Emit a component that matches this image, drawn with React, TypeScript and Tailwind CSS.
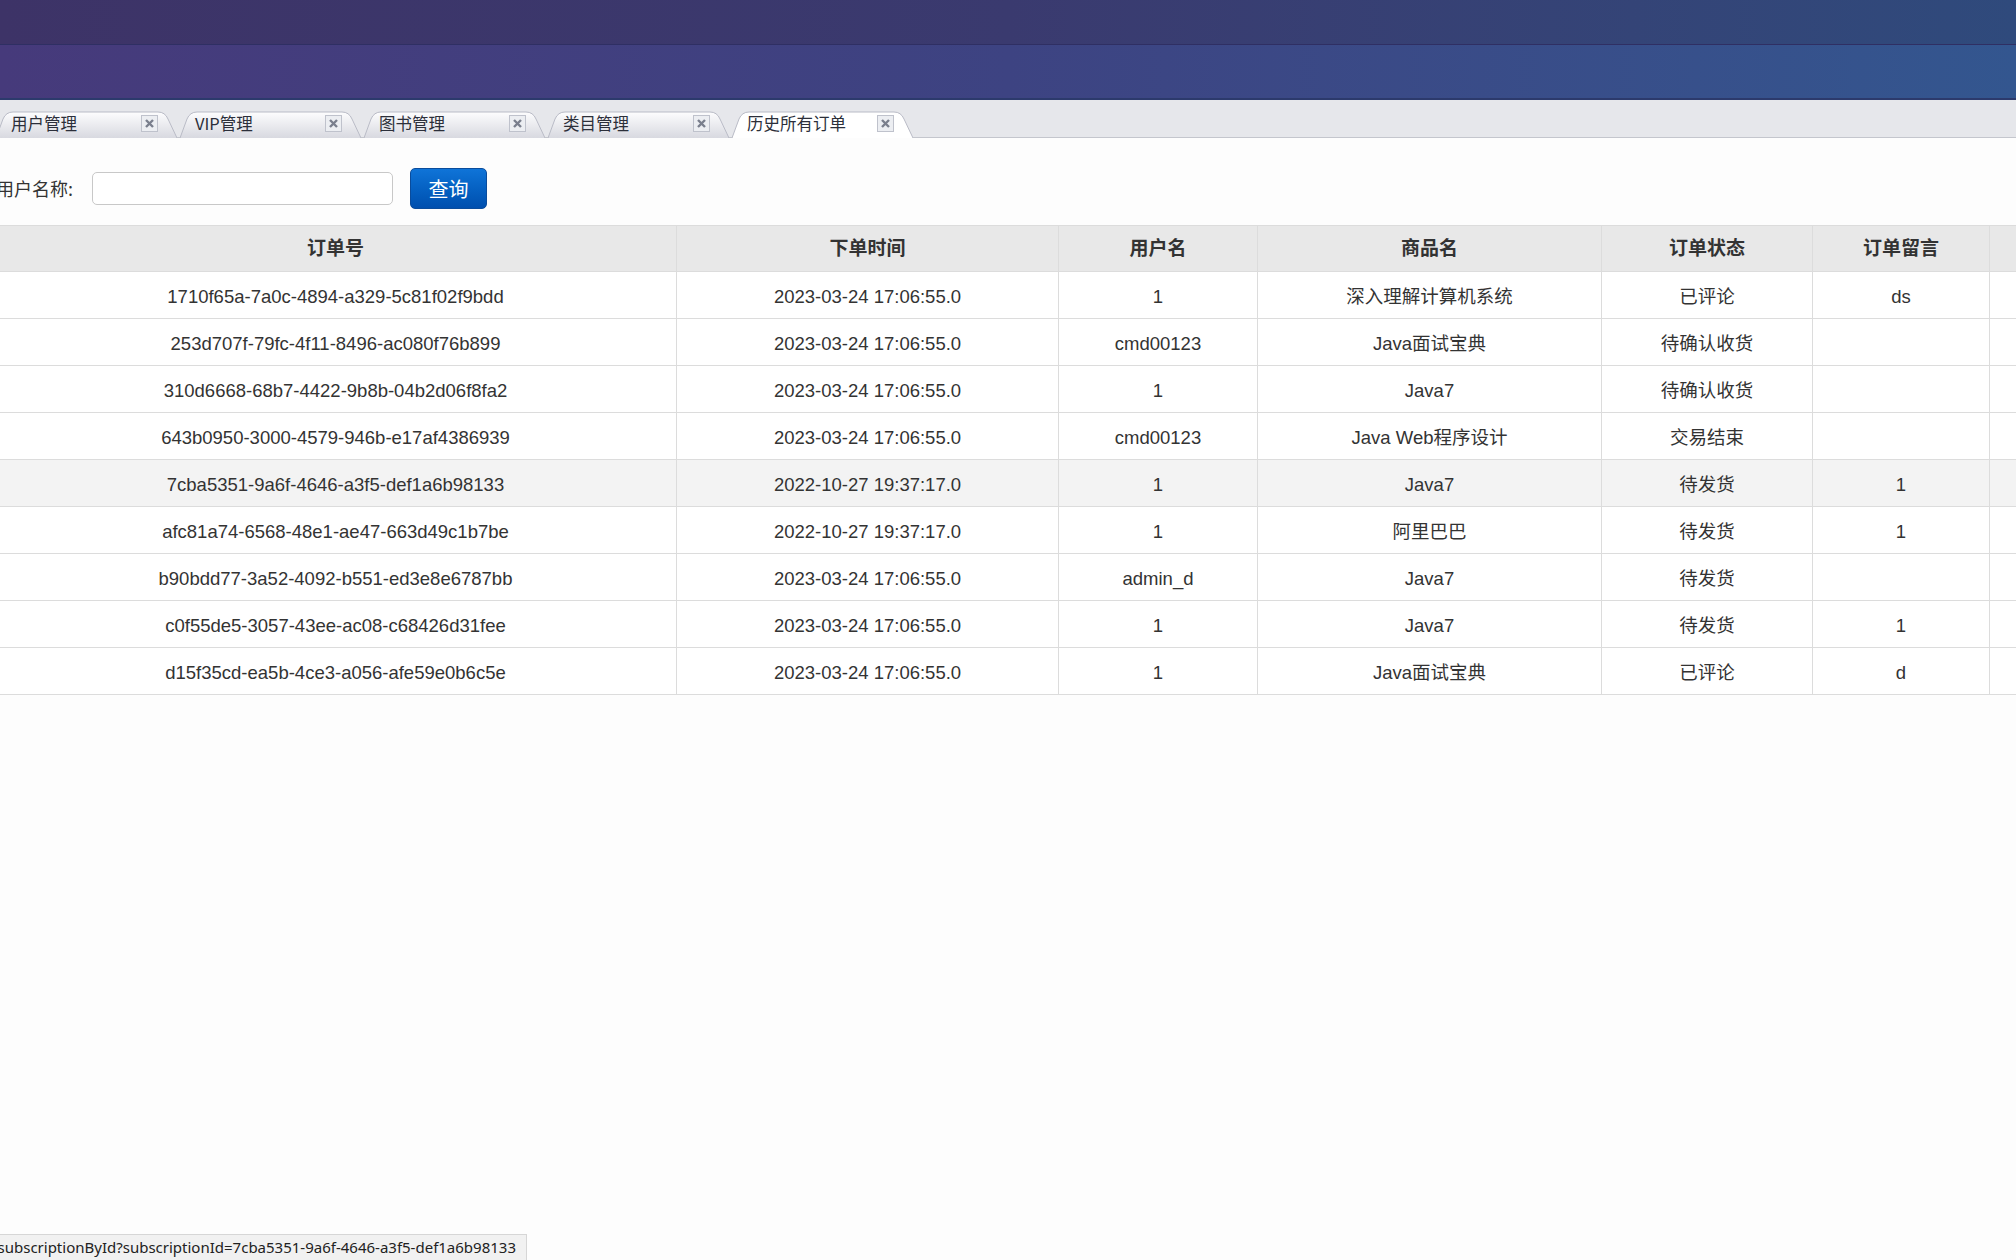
import React from "react";

type Order = {
  id: string;
  time: string;
  user: string;
  product: string;
  status: string;
  note: string;
};

const orders: Order[] = [
  { id: "1710f65a-7a0c-4894-a329-5c81f02f9bdd", time: "2023-03-24 17:06:55.0", user: "1", product: "深入理解计算机系统", status: "已评论", note: "ds" },
  { id: "253d707f-79fc-4f11-8496-ac080f76b899", time: "2023-03-24 17:06:55.0", user: "cmd00123", product: "Java面试宝典", status: "待确认收货", note: "" },
  { id: "310d6668-68b7-4422-9b8b-04b2d06f8fa2", time: "2023-03-24 17:06:55.0", user: "1", product: "Java7", status: "待确认收货", note: "" },
  { id: "643b0950-3000-4579-946b-e17af4386939", time: "2023-03-24 17:06:55.0", user: "cmd00123", product: "Java Web程序设计", status: "交易结束", note: "" },
  { id: "7cba5351-9a6f-4646-a3f5-def1a6b98133", time: "2022-10-27 19:37:17.0", user: "1", product: "Java7", status: "待发货", note: "1" },
  { id: "afc81a74-6568-48e1-ae47-663d49c1b7be", time: "2022-10-27 19:37:17.0", user: "1", product: "阿里巴巴", status: "待发货", note: "1" },
  { id: "b90bdd77-3a52-4092-b551-ed3e8e6787bb", time: "2023-03-24 17:06:55.0", user: "admin_d", product: "Java7", status: "待发货", note: "" },
  { id: "c0f55de5-3057-43ee-ac08-c68426d31fee", time: "2023-03-24 17:06:55.0", user: "1", product: "Java7", status: "待发货", note: "1" },
  { id: "d15f35cd-ea5b-4ce3-a056-afe59e0b6c5e", time: "2023-03-24 17:06:55.0", user: "1", product: "Java面试宝典", status: "已评论", note: "d" },
];

const tabs = ["用户管理", "VIP管理", "图书管理", "类目管理", "历史所有订单"];

function TabShape({ active }: { active: boolean }) {
  return (
    <svg className="absolute inset-0" width="181" height="27" viewBox="0 0 181 27">
      <defs>
        <linearGradient id={active ? "tabA" : "tabI"} x1="0" y1="0" x2="0" y2="1">
          <stop offset="0" stopColor={active ? "#ffffff" : "#fdfdfe"} />
          <stop offset="1" stopColor={active ? "#ffffff" : "#d8d9e0"} />
        </linearGradient>
      </defs>
      <path
        d="M0 27 L7 8 Q10 1 17 1 L162 1 Q169 1 172 8 L181 27"
        fill={`url(#${active ? "tabA" : "tabI"})`}
        stroke="#b9bbc6"
        strokeWidth="1"
      />
    </svg>
  );
}

function CloseBox() {
  return (
    <svg width="17" height="17" viewBox="0 0 17 17">
      <rect x="0.5" y="0.5" width="16" height="16" fill="#eceef2" stroke="#bfc2cc" />
      <path d="M5 5 L12 12 M12 5 L5 12" stroke="#7a7f8d" strokeWidth="2.4" />
    </svg>
  );
}

const cols = [
  { key: "id", title: "订单号", w: "w-[682px]" },
  { key: "time", title: "下单时间", w: "w-[382px]" },
  { key: "user", title: "用户名", w: "w-[199px]" },
  { key: "product", title: "商品名", w: "w-[344px]" },
  { key: "status", title: "订单状态", w: "w-[211px]" },
  { key: "note", title: "订单留言", w: "w-[177px]" },
  { key: "op", title: "", w: "w-[200px]" },
] as const;

export default function App() {
  return (
    <div className="relative min-h-[1260px] overflow-hidden bg-[#fdfdfd] font-['Liberation_Sans','Noto_Sans_CJK_SC',sans-serif] text-[#333]">
      {/* header */}
      <div className="h-[100px] flex flex-col">
        <div className="h-[45px] bg-gradient-to-r from-[#3d3367] via-[#3a3a6f] to-[#2f4a7c] border-b border-[#2f2f63]" />
        <div className="flex-1 bg-gradient-to-r from-[#463a7b] via-[#3d4382] to-[#33568f] border-b-2 border-[#2c3a6c]" />
      </div>

      {/* tab bar */}
      <div className="h-[38px] bg-[#e6e7eb] border-b border-[#c4c6cd] flex items-end">
        <div className="flex -ml-[4px] gap-[3px] -mb-px">
          {tabs.map((t, i) => {
            const active = i === tabs.length - 1;
            return (
              <div key={t} className="relative w-[181px] h-[27px]">
                <TabShape active={active} />
                <div className="relative flex items-center h-full pl-[15px] pr-[19px] justify-between pb-[2px]">
                  <span className="font-['Noto_Sans_CJK_SC',sans-serif] text-[16.5px] leading-none text-[#2c2f3a]">{t}</span>
                  <CloseBox />
                </div>
              </div>
            );
          })}
        </div>
      </div>

      {/* search */}
      <div className="flex items-center mt-[30px] -ml-[4px] h-[41px]">
        <span className="font-['Noto_Sans_CJK_SC',sans-serif] text-[18px] text-[#333] w-[96px]">用户名称:</span>
        <input className="w-[301px] h-[33px] border border-[#c8c8c8] rounded-[5px] bg-white outline-none" />
        <button className="ml-[17px] w-[77px] h-[41px] rounded-[5px] bg-gradient-to-b from-[#0f74d8] to-[#004fae] text-white text-[20px] font-['Noto_Sans_CJK_SC',sans-serif] border border-[#0a4c9c]">
          查询
        </button>
      </div>

      {/* table */}
      <div className="mt-[16px] -ml-[6px]">
        <table className="w-[2195px] border-collapse table-fixed text-[18.5px]">
          <thead>
            <tr className="h-[46px] bg-[#e8e8e8]">
              {cols.map((c) => (
                <th key={c.key} className={`${c.w} pt-[2px] border border-[#dcdcdc] font-bold text-[19px] text-[#333] font-['Liberation_Sans','Noto_Sans_CJK_SC',sans-serif]`}>
                  {c.title}
                </th>
              ))}
            </tr>
          </thead>
          <tbody>
            {orders.map((o, i) => (
              <tr key={o.id} className={`h-[47px] ${i === 4 ? "bg-[#f3f3f3]" : "bg-white"}`}>
                <td className="border border-[#dcdcdc] text-center pt-[3px]">{o.id}</td>
                <td className="border border-[#dcdcdc] text-center pt-[3px]">{o.time}</td>
                <td className="border border-[#dcdcdc] text-center pt-[3px]">{o.user}</td>
                <td className="border border-[#dcdcdc] text-center pt-[3px]">{o.product}</td>
                <td className="border border-[#dcdcdc] text-center pt-[3px]">{o.status}</td>
                <td className="border border-[#dcdcdc] text-center pt-[3px]">{o.note}</td>
                <td className="border border-[#dcdcdc] text-center pt-[3px]"></td>
              </tr>
            ))}
          </tbody>
        </table>
      </div>

      {/* browser status bubble */}
      <div className="fixed left-0 bottom-0 w-[527px] h-[26px] bg-[#f1f1f1] border-t border-r border-[#d6d6d6] flex items-center justify-end overflow-hidden pr-[10px]">
        <span className="whitespace-nowrap text-[15px] text-[#222] font-['Noto_Sans',sans-serif]">
          subscriptionById?subscriptionId=7cba5351-9a6f-4646-a3f5-def1a6b98133
        </span>
      </div>
    </div>
  );
}
